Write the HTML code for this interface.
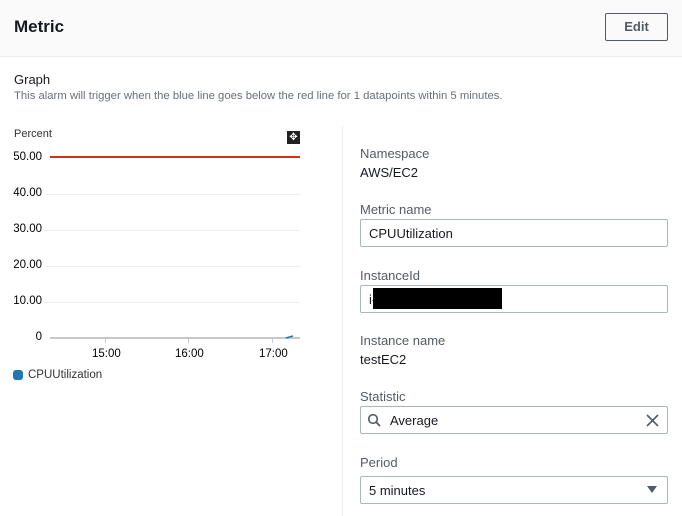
<!DOCTYPE html>
<html><head><style>
*{margin:0;padding:0;box-sizing:border-box}
body{width:682px;height:516px;background:#fff;font-family:"Liberation Sans",sans-serif;position:relative;overflow:hidden;color:#16191f}
.a{position:absolute;white-space:nowrap}
.hdr{left:0;top:0;width:682px;height:57px;background:#fafafa;border-bottom:1px solid #eaeded}
.lbl{font-size:13px;color:#545b64}
.val{font-size:13px;color:#16191f}
.inp{border:1px solid #aab7b8;border-radius:2px;left:360px;width:308px;height:28px;font-size:13px;padding:6px 8px}
.ax{font-size:11.5px;color:#000;text-align:right;width:42px;left:0}
.gl{left:45px;width:255px;height:1px;background:#eaeded}
</style></head><body>
<div class="a hdr"></div>
<div class="a" style="left:14px;top:17px;font-size:17px;font-weight:bold">Metric</div>
<div class="a" style="left:605px;top:13px;width:63px;height:28px;border:1px solid #545b64;border-radius:2px;font-size:13px;font-weight:bold;color:#545b64;text-align:center;line-height:26px">Edit</div>
<div class="a" style="left:14px;top:72px;font-size:13px">Graph</div>
<div class="a" style="left:14px;top:90px;font-size:11.3px;color:#687078">This alarm will trigger when the blue line goes below the red line for 1 datapoints within 5 minutes.</div>
<div class="a" style="left:14px;top:128px;font-size:11px;color:#333">Percent</div>
<div class="a" style="left:287px;top:131px;width:13px;height:13px;background:#222;color:#fff;font-size:10px;line-height:13px;text-align:center">✥</div>
<div class="a ax" style="top:151px">50.00</div>
<div class="a" style="left:50px;top:156px;width:250px;height:2px;background:#d13212"></div>
<div class="a ax" style="top:187px">40.00</div><div class="a gl" style="top:194px"></div>
<div class="a ax" style="top:223px">30.00</div><div class="a gl" style="top:230px"></div>
<div class="a ax" style="top:259px">20.00</div><div class="a gl" style="top:266px"></div>
<div class="a ax" style="top:295px">10.00</div><div class="a gl" style="top:302px"></div>
<div class="a ax" style="top:331px">0</div>
<div class="a" style="left:50px;top:337px;width:250px;height:2px;background:#c8c8c8"></div>
<div class="a" style="left:105px;top:339px;width:1px;height:4px;background:#ccc"></div>
<div class="a" style="left:188px;top:339px;width:1px;height:4px;background:#ccc"></div>
<div class="a" style="left:272px;top:339px;width:1px;height:4px;background:#ccc"></div>
<svg class="a" style="left:285px;top:334px" width="10" height="5"><path d="M1 4L8 2" stroke="#1f77b4" stroke-width="1.5"/></svg>
<div class="a" style="left:92px;top:348px;font-size:11.5px;color:#000">15:00</div>
<div class="a" style="left:175px;top:348px;font-size:11.5px;color:#000">16:00</div>
<div class="a" style="left:259px;top:348px;font-size:11.5px;color:#000">17:00</div>
<div class="a" style="left:13px;top:370px;width:10px;height:10px;border-radius:3px;background:#1f77b4"></div>
<div class="a" style="left:28px;top:369px;font-size:11.5px;color:#333">CPUUtilization</div>
<div class="a" style="left:342px;top:126px;width:1px;height:390px;background:#eaeded"></div>
<div class="a lbl" style="left:360px;top:146px">Namespace</div>
<div class="a val" style="left:360px;top:165px">AWS/EC2</div>
<div class="a lbl" style="left:360px;top:202px">Metric name</div>
<div class="a inp" style="top:219px">CPUUtilization</div>
<div class="a lbl" style="left:360px;top:268px">InstanceId</div>
<div class="a inp" style="top:285px">i-</div>
<div class="a" style="left:373px;top:288px;width:129px;height:21px;background:#000"></div>
<div class="a lbl" style="left:360px;top:333px">Instance name</div>
<div class="a val" style="left:360px;top:352px">testEC2</div>
<div class="a lbl" style="left:360px;top:389px">Statistic</div>
<div class="a inp" style="top:406px;padding-left:29px">Average</div>
<svg class="a" style="left:367px;top:413px" width="14" height="14" viewBox="0 0 14 14"><circle cx="6" cy="6" r="4.3" fill="none" stroke="#545b64" stroke-width="1.6"/><path d="M9 9l4 4" stroke="#545b64" stroke-width="1.8"/></svg>
<svg class="a" style="left:646px;top:414px" width="13" height="13" viewBox="0 0 13 13"><path d="M1 1l11 11M12 1L1 12" stroke="#545b64" stroke-width="1.6"/></svg>
<div class="a lbl" style="left:360px;top:455px">Period</div>
<div class="a inp" style="top:476px">5 minutes</div>
<svg class="a" style="left:647px;top:486px" width="10" height="8" viewBox="0 0 10 8"><path d="M0 0h10L5 7z" fill="#545b64"/></svg>
</body></html>
